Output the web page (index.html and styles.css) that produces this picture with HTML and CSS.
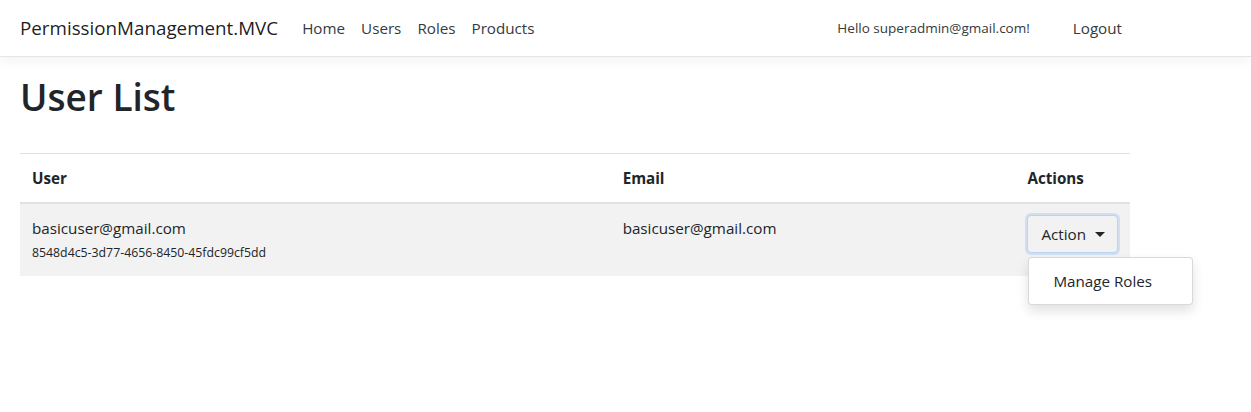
FILE: index.html
```html
<!DOCTYPE html>
<html lang="en">
<head>
<meta charset="utf-8">
<title>User List - PermissionManagement.MVC</title>
<link rel="stylesheet" href="styles.css">
</head>
<body>
<header class="navbar">
  <div class="container nav-inner">
    <a class="brand" href="#">PermissionManagement.MVC</a>
    <ul class="nav-links">
      <li><a class="nav-link" href="#">Home</a></li>
      <li><a class="nav-link" href="#">Users</a></li>
      <li><a class="nav-link" href="#">Roles</a></li>
      <li><a class="nav-link" href="#">Products</a></li>
    </ul>
    <ul class="nav-links nav-right">
      <li><span class="nav-link hello">Hello superadmin@gmail.com!</span></li>
      <li><a class="nav-link" href="#">Logout</a></li>
    </ul>
  </div>
</header>
<main class="container main">
  <h1 class="title">User List</h1>
  <table class="table">
    <thead>
      <tr>
        <th class="col-user">User</th>
        <th class="col-email">Email</th>
        <th class="col-actions">Actions</th>
      </tr>
    </thead>
    <tbody>
      <tr>
        <td>
          <div>basicuser@gmail.com</div>
          <div class="uid">8548d4c5-3d77-4656-8450-45fdc99cf5dd</div>
        </td>
        <td>basicuser@gmail.com</td>
        <td>
          <div class="dropdown">
            <button class="btn" type="button">Action<span class="caret"></span></button>
            <div class="dropdown-menu">
              <a class="dropdown-item" href="#">Manage Roles</a>
            </div>
          </div>
        </td>
      </tr>
    </tbody>
  </table>
</main>
</body>
</html>
```
FILE: styles.css
```css
* { box-sizing: border-box; }
html, body {
  margin: 0;
  background: #fff;
}
body {
  font-family: "Open Sans", "Noto Sans", sans-serif;
  font-size: 15.2px;
  line-height: 24px;
  color: #212529;
  min-height: 100vh;
}
a { text-decoration: none; }
.container {
  width: 1110px;
  margin-left: 20px;
}
.main { padding-bottom: 140px; }
.navbar {
  height: 57px;
  border-bottom: 1px solid #e5e5e5;
  box-shadow: 0 4px 12px rgba(0,0,0,0.05);
  margin-bottom: 16px;
  background: #fff;
}
.nav-inner {
  display: flex;
  align-items: center;
  height: 56px;
}
.brand {
  font-size: 18.8px;
  line-height: 30px;
  color: rgba(0,0,0,0.9);
  margin-right: 16px;
}
.nav-links {
  display: flex;
  list-style: none;
  margin: 0;
  padding: 0;
}
.nav-right { margin-left: auto; }
.nav-link {
  display: block;
  padding: 8px;
  color: #343a40;
}
.hello {
  font-size: 13.5px;
  margin-right: 27px;
}
.title {
  font-size: 37px;
  font-weight: 600;
  line-height: 48px;
  margin: 2px 0 32px 0;
}
.table {
  width: 1110px;
  border-collapse: collapse;
}
.table th, .table td {
  padding: 12px;
  text-align: left;
  vertical-align: top;
  border-top: 1px solid #dee2e6;
}
.table th { font-weight: 700; }
.table thead th { border-bottom: 2px solid #dee2e6; }
.table tbody tr { background: #f2f2f2; }
.col-user { width: 591px; }
.col-email { width: 405px; }
.col-actions { width: 114px; }
.uid {
  font-size: 12.3px;
  line-height: 22px;
  padding-top: 2px;
}
.dropdown {
  position: relative;
  margin-top: -1px;
}
.btn {
  font-family: inherit;
  font-size: 15.2px;
  line-height: 24px;
  color: #212529;
  background: #f2f2f2;
  border: 1px solid #b9d3f3;
  border-radius: 4px;
  padding: 6px 12px 6px 13px;
  box-shadow: 0 0 0 2px rgba(150,190,240,0.35);
  display: inline-flex;
  align-items: center;
}
.caret {
  display: inline-block;
  margin-left: 9px;
  border-top: 5px solid #212529;
  border-left: 5px solid transparent;
  border-right: 5px solid transparent;
}
.dropdown-menu {
  position: absolute;
  top: 42px;
  left: 1px;
  min-width: 165px;
  padding: 7px 0;
  background: #fff;
  border: 1px solid rgba(0,0,0,0.15);
  border-radius: 4px;
  box-shadow: 0 6px 12px rgba(0,0,0,0.12);
  z-index: 10;
}
.dropdown-item {
  display: block;
  padding: 4px 24px;
  color: #212529;
  white-space: nowrap;
}
```
